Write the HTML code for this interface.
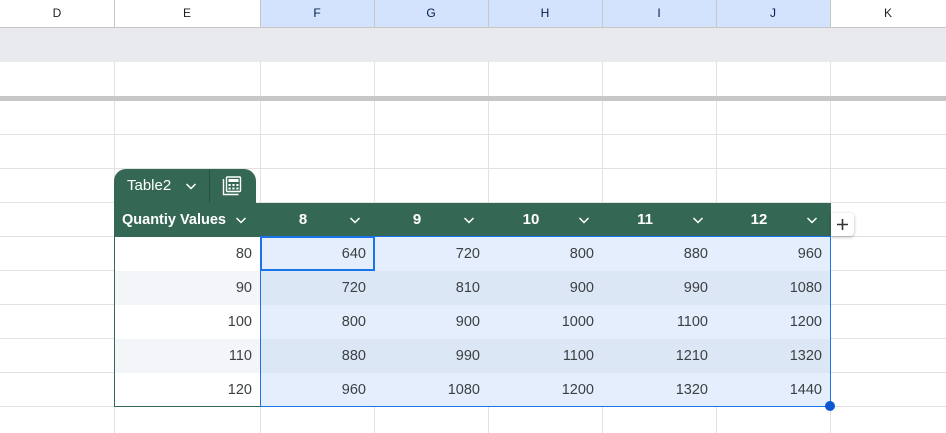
<!DOCTYPE html>
<html><head><style>
*{margin:0;padding:0;box-sizing:border-box}
body{width:946px;height:433px;overflow:hidden;background:#fff;font-family:"Liberation Sans",Roboto,Arial,sans-serif;position:relative}
.a{position:absolute}
.vl{position:absolute;width:1px;background:#e1e1e1}
.hl{position:absolute;height:1px;background:#e1e1e1;left:0;width:946px}
.ch{position:absolute;top:0;height:27px;font-size:12px;color:#1f1f1f;text-align:center;line-height:27px}
.num{position:absolute;font-size:14.5px;color:#3c4043;text-align:right;line-height:34px;height:34px}
.hd{position:absolute;top:203px;height:34px;line-height:34px;color:#fff;font-weight:bold;font-size:15px}
.chev{position:absolute;top:213px;width:14px;height:14px}
</style></head><body>
<div class="a" style="left:0;top:0;width:946px;height:28px;background:#fff;border-bottom:1px solid #c7c7c7"></div>
<div class="a" style="left:260px;top:0;width:570px;height:27px;background:#d3e3fd"></div>
<div class="ch" style="left:0;width:114px">D</div>
<div class="ch" style="left:114px;width:146px">E</div>
<div class="ch" style="left:260px;width:114px;color:#041e49">F</div>
<div class="ch" style="left:374px;width:114px;color:#041e49">G</div>
<div class="ch" style="left:488px;width:114px;color:#041e49">H</div>
<div class="ch" style="left:602px;width:114px;color:#041e49">I</div>
<div class="ch" style="left:716px;width:114px;color:#041e49">J</div>
<div class="ch" style="left:830px;width:116px">K</div>
<div class="a" style="left:0;top:28px;width:946px;height:34px;background:#e8eaed"></div>
<div class="vl" style="left:114px;top:0;height:28px;background:#c7c7c7"></div>
<div class="vl" style="left:260px;top:0;height:28px;background:#c7c7c7"></div>
<div class="vl" style="left:374px;top:0;height:28px;background:#c7c7c7"></div>
<div class="vl" style="left:488px;top:0;height:28px;background:#c7c7c7"></div>
<div class="vl" style="left:602px;top:0;height:28px;background:#c7c7c7"></div>
<div class="vl" style="left:716px;top:0;height:28px;background:#c7c7c7"></div>
<div class="vl" style="left:830px;top:0;height:28px;background:#c7c7c7"></div>
<div class="vl" style="left:114px;top:62px;height:371px"></div>
<div class="vl" style="left:260px;top:62px;height:371px"></div>
<div class="vl" style="left:374px;top:62px;height:371px"></div>
<div class="vl" style="left:488px;top:62px;height:371px"></div>
<div class="vl" style="left:602px;top:62px;height:371px"></div>
<div class="vl" style="left:716px;top:62px;height:371px"></div>
<div class="vl" style="left:830px;top:62px;height:371px"></div>
<div class="a" style="left:0;top:96px;width:946px;height:5px;background:#c7c7c7"></div>
<div class="hl" style="top:134px"></div>
<div class="hl" style="top:168px"></div>
<div class="hl" style="top:202px"></div>
<div class="hl" style="top:236px"></div>
<div class="hl" style="top:270px"></div>
<div class="hl" style="top:304px"></div>
<div class="hl" style="top:338px"></div>
<div class="hl" style="top:372px"></div>
<div class="hl" style="top:406px"></div>
<div class="a" style="left:114px;top:169px;width:142px;height:36px;background:#356854;border-radius:12px 12px 0 0"></div>
<div class="a" style="left:209px;top:170px;width:1px;height:33px;background:#27503f"></div>
<div class="a" style="left:127px;top:169px;height:34px;line-height:34px;color:#fff;font-size:15px">Table2</div>
<svg class="a" style="left:184px;top:179px" width="14" height="14" viewBox="0 0 14 14"><path d="M2.5 5l4.5 4.5 4.5-4.5" fill="none" stroke="#fff" stroke-width="1.5"/></svg>
<svg class="a" style="left:222px;top:176px" width="21" height="20" viewBox="0 0 21 20"><path d="M1.5 3v15.5h15" fill="none" stroke="#fff" stroke-width="1.4"/><rect x="4.5" y="1" width="14" height="14.5" rx="1" fill="none" stroke="#fff" stroke-width="1.4"/><rect x="6.5" y="3" width="10" height="3" fill="#fff"/><g fill="#fff"><rect x="6.5" y="8" width="2.2" height="2"/><rect x="10.4" y="8" width="2.2" height="2"/><rect x="14.3" y="8" width="2.2" height="2"/><rect x="6.5" y="11.5" width="2.2" height="2"/><rect x="10.4" y="11.5" width="2.2" height="2"/><rect x="14.3" y="11.5" width="2.2" height="2"/></g></svg>
<div class="a" style="left:114px;top:203px;width:717px;height:34px;background:#356854"></div>
<div class="hd" style="left:122px;font-size:14.5px">Quantiy Values</div>
<div class="hd" style="left:260px;width:86px;text-align:center">8</div>
<div class="hd" style="left:374px;width:86px;text-align:center">9</div>
<div class="hd" style="left:488px;width:86px;text-align:center">10</div>
<div class="hd" style="left:602px;width:86px;text-align:center">11</div>
<div class="hd" style="left:716px;width:86px;text-align:center">12</div>
<svg class="chev" style="left:234px" viewBox="0 0 14 14"><path d="M2.5 5l4.5 4.5 4.5-4.5" fill="none" stroke="#fff" stroke-width="1.5"/></svg>
<svg class="chev" style="left:348px" viewBox="0 0 14 14"><path d="M2.5 5l4.5 4.5 4.5-4.5" fill="none" stroke="#fff" stroke-width="1.5"/></svg>
<svg class="chev" style="left:462px" viewBox="0 0 14 14"><path d="M2.5 5l4.5 4.5 4.5-4.5" fill="none" stroke="#fff" stroke-width="1.5"/></svg>
<svg class="chev" style="left:577px" viewBox="0 0 14 14"><path d="M2.5 5l4.5 4.5 4.5-4.5" fill="none" stroke="#fff" stroke-width="1.5"/></svg>
<svg class="chev" style="left:691px" viewBox="0 0 14 14"><path d="M2.5 5l4.5 4.5 4.5-4.5" fill="none" stroke="#fff" stroke-width="1.5"/></svg>
<svg class="chev" style="left:805px" viewBox="0 0 14 14"><path d="M2.5 5l4.5 4.5 4.5-4.5" fill="none" stroke="#fff" stroke-width="1.5"/></svg>
<div class="a" style="left:831px;top:213px;width:23px;height:23px;background:#fff;border-radius:0 4px 4px 0;box-shadow:0 1px 3px rgba(0,0,0,.3)"></div>
<svg class="a" style="left:836px;top:218px" width="13" height="13" viewBox="0 0 13 13"><path d="M6.5 1v11M1 6.5h11" stroke="#333" stroke-width="1.6"/></svg>
<div class="a" style="left:114px;top:237px;width:146px;height:170px;background:#fff;border-left:1px solid #356854;border-bottom:1px solid #356854"></div>
<div class="a" style="left:115px;top:271px;width:145px;height:34px;background:#f3f5f8"></div>
<div class="a" style="left:115px;top:339px;width:145px;height:34px;background:#f3f5f8"></div>
<div class="a" style="left:260px;top:236px;width:571px;height:171px;background:#e4eefc;border:1px solid #1a73e8"></div>
<div class="a" style="left:261px;top:271px;width:569px;height:34px;background:#dce7f6"></div>
<div class="a" style="left:261px;top:339px;width:569px;height:34px;background:#dce7f6"></div>
<div class="a" style="left:260px;top:236px;width:115px;height:35px;border:2px solid #1a73e8"></div>
<div class="a" style="left:825px;top:401px;width:10px;height:10px;border-radius:50%;background:#0b57d0"></div>
<div class="num" style="left:114px;width:138px;top:237px">80</div>
<div class="num" style="left:114px;width:138px;top:271px">90</div>
<div class="num" style="left:114px;width:138px;top:305px">100</div>
<div class="num" style="left:114px;width:138px;top:339px">110</div>
<div class="num" style="left:114px;width:138px;top:373px">120</div>
<div class="num" style="left:260px;width:106px;top:237px">640</div>
<div class="num" style="left:374px;width:106px;top:237px">720</div>
<div class="num" style="left:488px;width:106px;top:237px">800</div>
<div class="num" style="left:602px;width:106px;top:237px">880</div>
<div class="num" style="left:716px;width:106px;top:237px">960</div>
<div class="num" style="left:260px;width:106px;top:271px">720</div>
<div class="num" style="left:374px;width:106px;top:271px">810</div>
<div class="num" style="left:488px;width:106px;top:271px">900</div>
<div class="num" style="left:602px;width:106px;top:271px">990</div>
<div class="num" style="left:716px;width:106px;top:271px">1080</div>
<div class="num" style="left:260px;width:106px;top:305px">800</div>
<div class="num" style="left:374px;width:106px;top:305px">900</div>
<div class="num" style="left:488px;width:106px;top:305px">1000</div>
<div class="num" style="left:602px;width:106px;top:305px">1100</div>
<div class="num" style="left:716px;width:106px;top:305px">1200</div>
<div class="num" style="left:260px;width:106px;top:339px">880</div>
<div class="num" style="left:374px;width:106px;top:339px">990</div>
<div class="num" style="left:488px;width:106px;top:339px">1100</div>
<div class="num" style="left:602px;width:106px;top:339px">1210</div>
<div class="num" style="left:716px;width:106px;top:339px">1320</div>
<div class="num" style="left:260px;width:106px;top:373px">960</div>
<div class="num" style="left:374px;width:106px;top:373px">1080</div>
<div class="num" style="left:488px;width:106px;top:373px">1200</div>
<div class="num" style="left:602px;width:106px;top:373px">1320</div>
<div class="num" style="left:716px;width:106px;top:373px">1440</div>
</body></html>
